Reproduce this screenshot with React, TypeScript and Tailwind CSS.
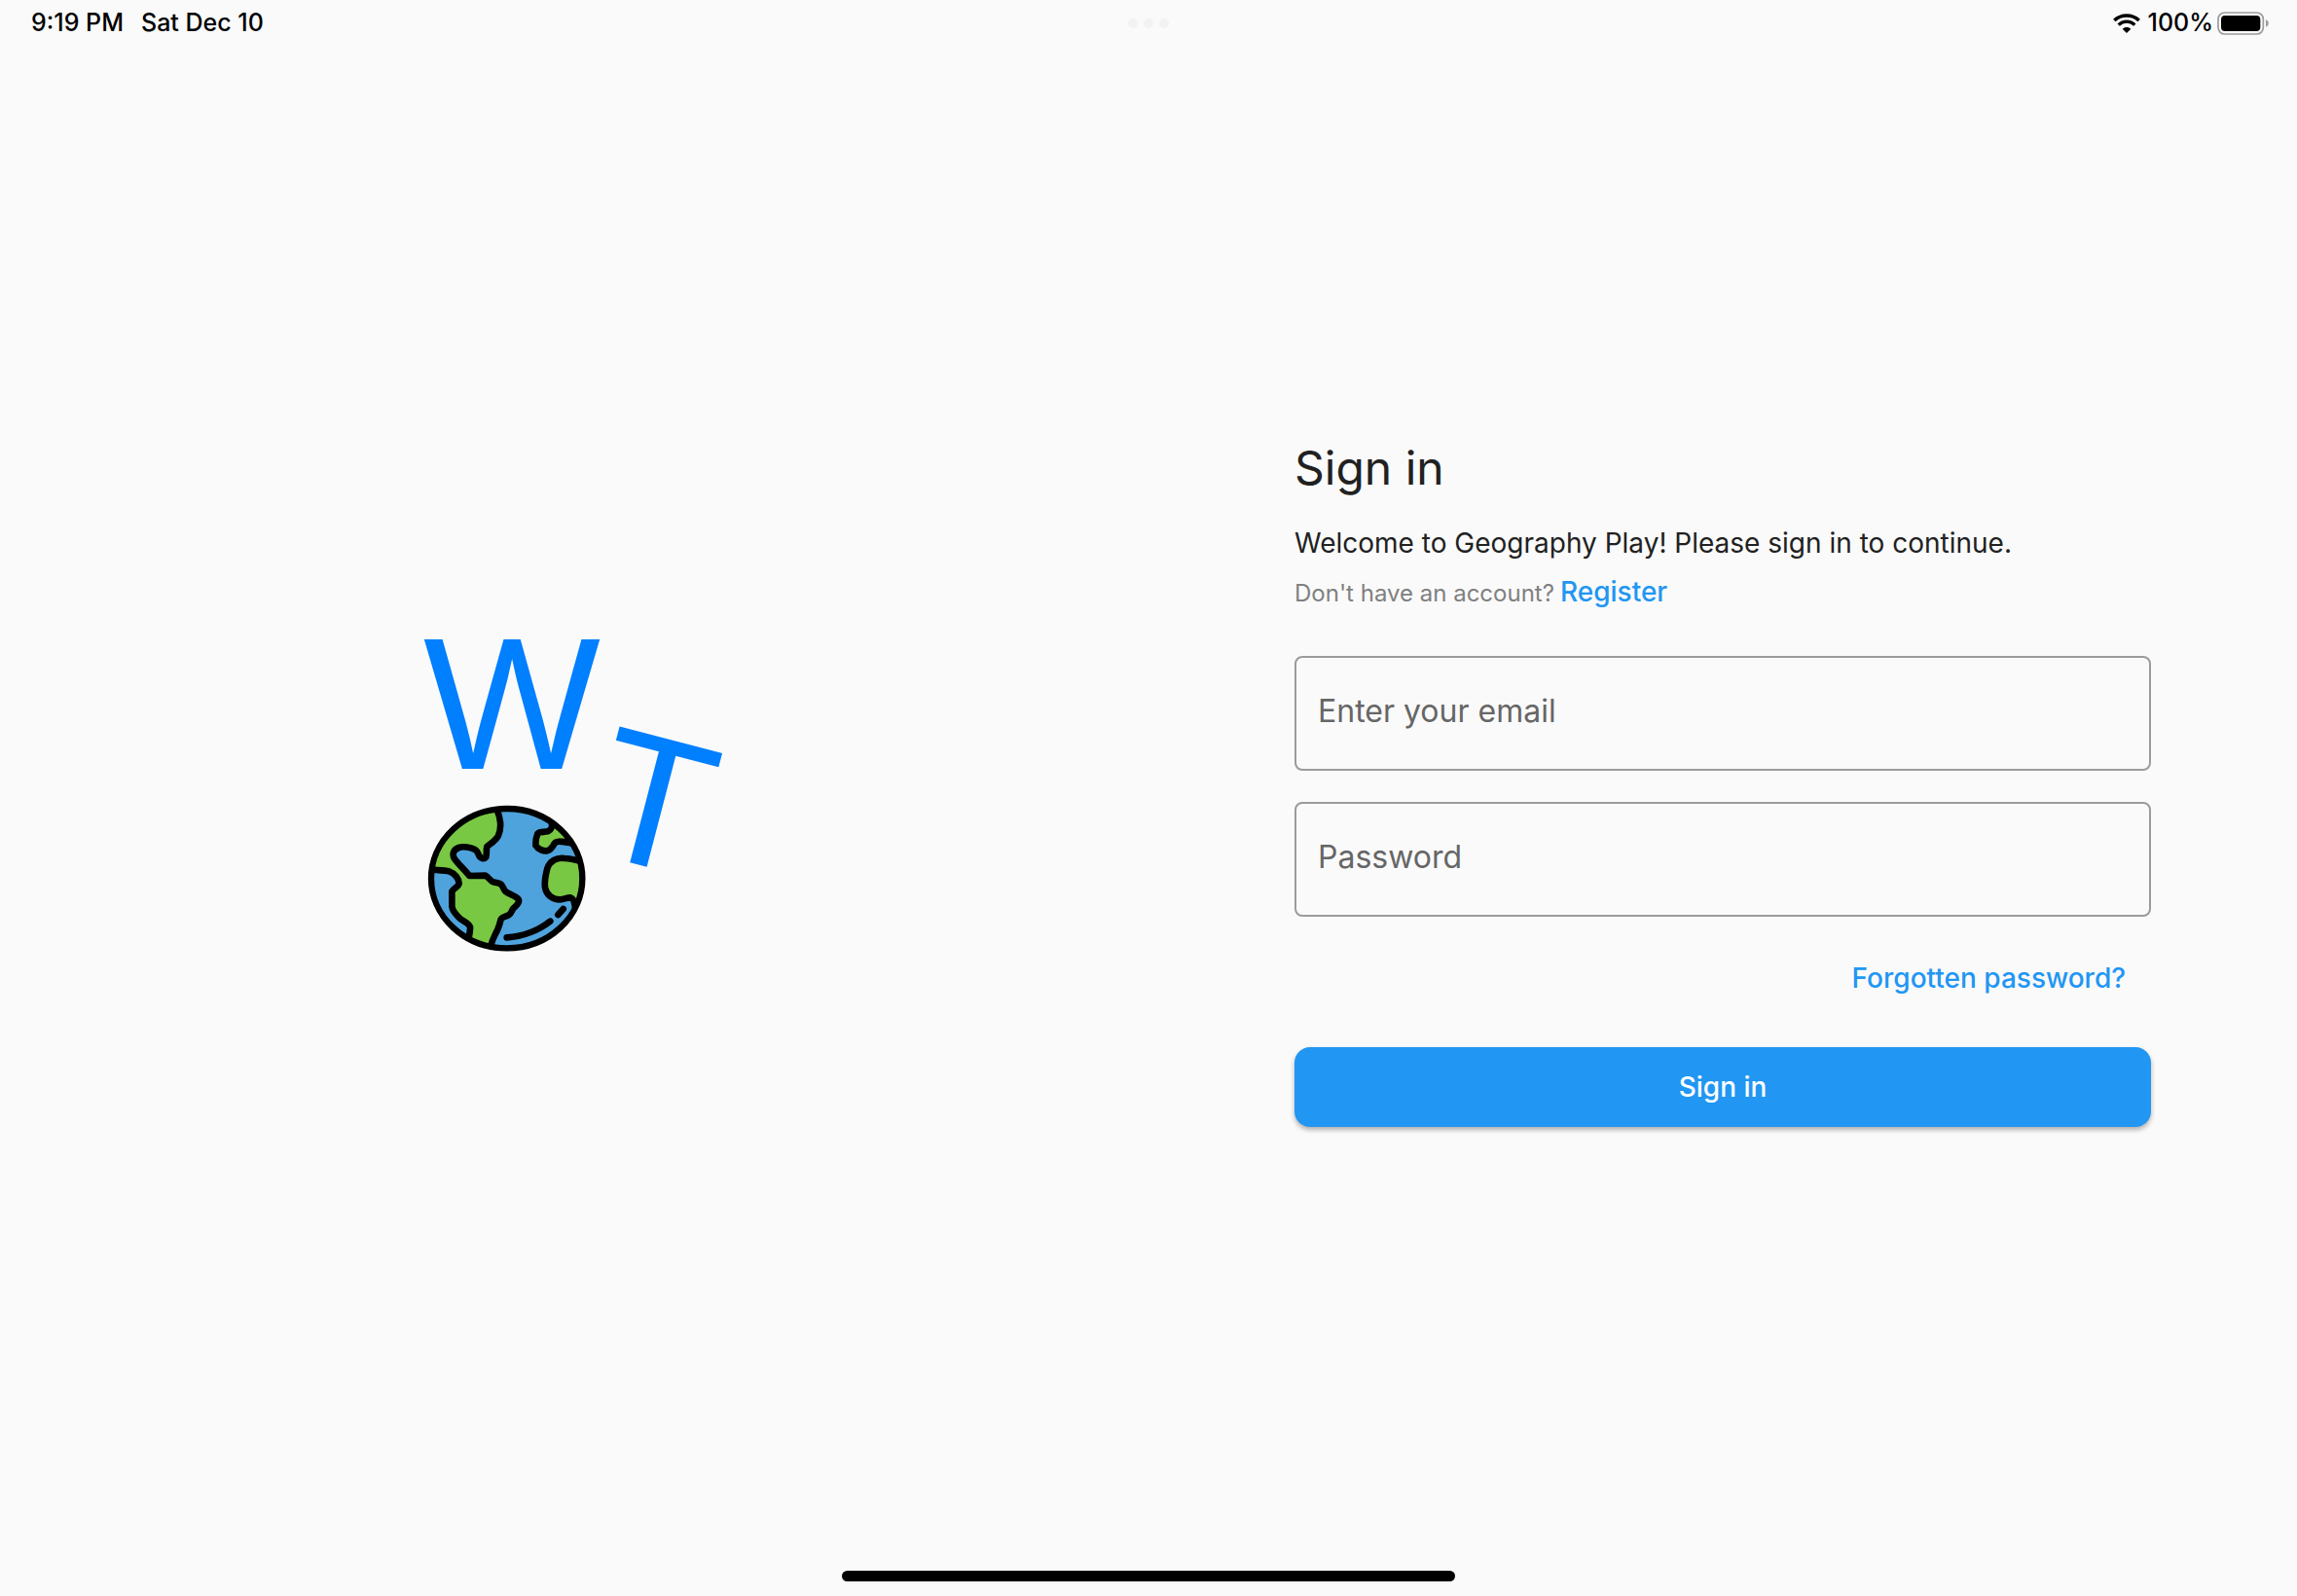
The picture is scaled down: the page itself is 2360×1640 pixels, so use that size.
import React from "react";

function StatusBar() {
  return (
    <header className="grid h-12 grid-cols-3 items-center px-8 text-[25px] font-medium text-black">
      <div className="flex items-center gap-[18px]">
        <time>9:19 PM</time>
        <span>Sat Dec 10</span>
      </div>
      <div className="flex items-center justify-center gap-1.5" aria-hidden="true">
        <span className="size-2.5 rounded-full bg-[#f2f2f2]" />
        <span className="size-2.5 rounded-full bg-[#f2f2f2]" />
        <span className="size-2.5 rounded-full bg-[#f2f2f2]" />
      </div>
      <div className="-mr-1 flex items-center justify-end gap-2">
        <WifiIcon />
        <div className="flex items-center gap-1">
          <span>100%</span>
          <BatteryIcon />
        </div>
      </div>
    </header>
  );
}

function WifiIcon() {
  return (
    <svg className="h-5 w-7" viewBox="0 0 84 60" fill="none" aria-label="Wi-Fi">
      <path d="M4 21C25 1 59 1 80 21" stroke="#000" strokeWidth="11" />
      <path d="M17 35C31 21 53 21 67 35" stroke="#000" strokeWidth="10" />
      <path d="M29 47C36 40 48 40 55 47L42 60Z" fill="#000" />
    </svg>
  );
}

function BatteryIcon() {
  return (
    <svg className="h-6 w-[54px]" viewBox="0 0 162 72" fill="none" aria-label="Battery full">
      <rect x="3" y="3" width="139" height="66" rx="20" stroke="#9c9c9c" strokeWidth="5" />
      <rect x="12" y="12" width="121" height="48" rx="12" fill="#000" />
      <path d="M150 25C161 28 161 44 150 47Z" fill="#9c9c9c" />
    </svg>
  );
}

function Logo() {
  return (
    <svg
      className="h-[330px] w-[304px] overflow-visible"
      viewBox="54 45 912 990"
      role="img"
      aria-label="WT"
    >
      <defs>
        <clipPath id="globe">
          <ellipse cx="302" cy="788" rx="236" ry="218" />
        </clipPath>
      </defs>
      <g
        fill="#007fff"
        fontFamily="'Liberation Sans', Arial, sans-serif"
        fontSize="578"
        textAnchor="middle"
      >
        <text x="318" y="451">
          W
        </text>
        <text x="708" y="746" transform="rotate(14.6 708 746)">
          T
        </text>
      </g>
      <ellipse cx="302" cy="788" rx="236" ry="218" fill="#4fa3dc" />
      <g
        clipPath="url(#globe)"
        fill="#79c843"
        stroke="#000"
        strokeWidth="20"
        strokeLinejoin="round"
        strokeLinecap="round"
      >
        <path d="M268 570C285 600 286 634 276 656C268 672 252 680 241 690C238 700 241 714 238 722C232 730 223 727 218 720C213 710 211 702 204 699C190 692 168 688 154 693C138 699 133 712 140 726C150 742 170 758 187 780L236 779C244 782 250 794 258 798C268 802 278 801 284 806C292 814 292 822 298 828C312 838 330 842 338 852C342 860 336 868 326 877C316 884 318 896 308 901C298 906 288 906 284 914C280 930 276 944 268 957C260 972 254 984 250 1010L182 990C184 972 190 952 189 938C185 924 164 920 154 908C142 896 134 886 133 874L133 828C138 818 154 814 155 803C155 790 142 772 124 766C108 762 92 763 60 760L60 560Z" />
        <path d="M440 610C444 630 440 638 428 643C416 646 404 642 397 650C392 662 390 676 391 686C398 698 414 704 426 703C438 700 444 690 448 682C452 672 466 672 500 679L520 640L470 600Z" />
        <path d="M540 737C520 732 500 727 480 726C456 722 434 735 427 757C422 776 418 800 420 815C424 840 444 853 466 853C480 853 488 846 498 847C508 850 510 858 514 884L560 860Z" />
        <path d="M302 970C350 968 400 948 436 920" fill="none" />
        <path d="M460 900L476 882" fill="none" />
      </g>
      <ellipse
        cx="302"
        cy="788"
        rx="233"
        ry="215"
        fill="none"
        stroke="#000"
        strokeWidth="19"
      />
    </svg>
  );
}

function Field({ id, type, label }: { id: string; type: string; label: string }) {
  return (
    <div>
      <label htmlFor={id} className="sr-only">
        {label}
      </label>
      <input
        id={id}
        type={type}
        placeholder={label}
        className="block h-[118px] w-full rounded-lg border-2 border-[#9b9b9b] bg-transparent px-[22px] pb-1 text-[32px] text-[#212121] placeholder:text-[#666666]"
      />
    </div>
  );
}

function SignInForm() {
  return (
    <form className="w-full max-w-[880px] pb-8" onSubmit={(e) => e.preventDefault()}>
      <h1 className="text-5xl leading-[60px] text-[#212121]">Sign in</h1>
      <p className="mt-6 text-[28px] leading-[46px] text-[#212121]">
        Welcome to Geography Play! Please sign in to continue.
      </p>
      <p className="mt-1 flex items-baseline gap-1.5 text-2xl leading-[46px] text-[#808080]">
        Don't have an account?
        <a href="#register" className="text-[28px] font-medium text-[#2196f3]">
          Register
        </a>
      </p>
      <div className="mt-[41px] flex flex-col gap-8">
        <Field id="email" type="email" label="Enter your email" />
        <Field id="password" type="password" label="Password" />
      </div>
      <div className="mt-10 flex justify-end pr-[26px]">
        <a href="#reset" className="text-[28px] leading-[46px] font-medium text-[#2196f3]">
          Forgotten password?
        </a>
      </div>
      <button
        type="submit"
        className="mt-12 block h-[82px] w-full rounded-2xl bg-[#2196f3] text-[28px] font-medium text-white shadow-[0_3px_5px_rgba(0,0,0,0.3)]"
      >
        Sign in
      </button>
    </form>
  );
}

export default function App() {
  return (
    <div className="flex min-h-screen flex-col bg-[#fafafa] font-[Inter,sans-serif]">
      <StatusBar />
      <main className="grid flex-1 grid-cols-2 items-center">
        <div className="flex justify-center">
          <Logo />
        </div>
        <div className="flex justify-center px-8">
          <SignInForm />
        </div>
      </main>
      <footer className="flex h-12 items-end justify-center pb-[15px]">
        <div className="h-[11px] w-[630px] rounded-full bg-black" />
      </footer>
    </div>
  );
}
